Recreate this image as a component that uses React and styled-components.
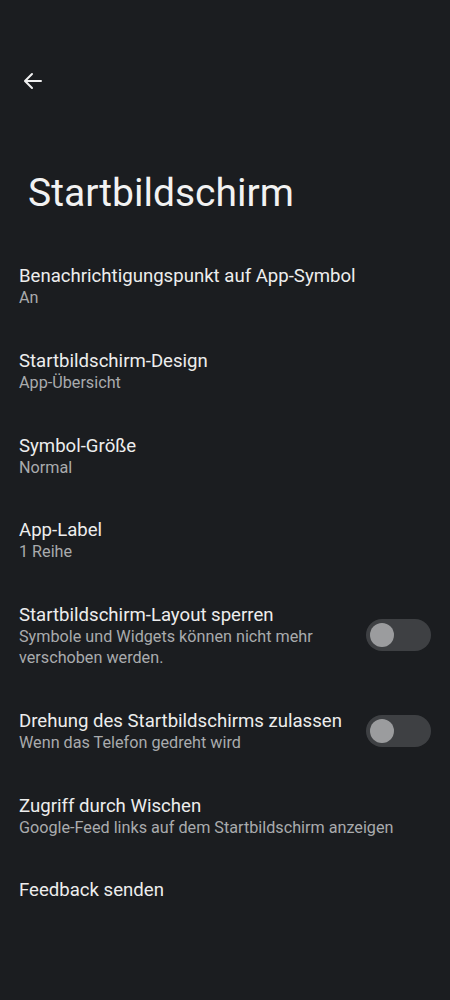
import React from "react";
import styled, { createGlobalStyle } from "styled-components";

const Global = createGlobalStyle`
    body {
        margin: 0;
        background: #1b1d20;
        font-family: Roboto, "Noto Sans", sans-serif;
        -webkit-font-smoothing: antialiased;
    }
`;

const Page = styled.div`
    min-height: 1000px;
    background: #1b1d20;
    color: #e6e6e6;
`;

const TopBar = styled.div`
    height: 48px;
    padding: 57px 0 0 21px;
    display: flex;
    align-items: center;
`;

const BackButton = styled.button`
    width: 24px;
    height: 24px;
    padding: 0;
    border: none;
    background: none;
    display: flex;
    align-items: center;
    justify-content: center;
    color: #f0f0f0;
`;

const Title = styled.h1`
    margin: 65px 0 28px 28px;
    font-size: 39px;
    line-height: 46px;
    font-weight: 400;
    color: #f2f2f2;
`;

const List = styled.div`
    display: flex;
    flex-direction: column;
`;

const Row = styled.div`
    display: flex;
    align-items: center;
    gap: 16px;
    padding: 20px 19px 20px 19px;
`;

const Texts = styled.div`
    flex: 1;
    display: flex;
    flex-direction: column;
`;

const ItemTitle = styled.div`
    font-size: 18.6px;
    line-height: 24px;
    color: #ededed;
`;

const ItemSub = styled.div`
    font-size: 16.2px;
    line-height: 20.8px;
    color: #a9abad;
`;

const Track = styled.div`
    flex: none;
    width: 65px;
    height: 32px;
    margin-top: -1px;
    border-radius: 16px;
    background: #3e4043;
    display: flex;
    align-items: center;
    padding: 0 4px;
    box-sizing: border-box;
    justify-content: ${(p) => (p.$on ? "flex-end" : "flex-start")};
`;

const Thumb = styled.div`
    width: 24px;
    height: 24px;
    border-radius: 50%;
    background: #9b9c9e;
`;

const items = [
    { title: "Benachrichtigungspunkt auf App-Symbol", sub: ["An"] },
    { title: "Startbildschirm-Design", sub: ["App-Übersicht"] },
    { title: "Symbol-Größe", sub: ["Normal"] },
    { title: "App-Label", sub: ["1 Reihe"] },
    {
        title: "Startbildschirm-Layout sperren",
        sub: ["Symbole und Widgets können nicht mehr", "verschoben werden."],
        toggle: true,
    },
    {
        title: "Drehung des Startbildschirms zulassen",
        sub: ["Wenn das Telefon gedreht wird"],
        toggle: true,
    },
    {
        title: "Zugriff durch Wischen",
        sub: ["Google-Feed links auf dem Startbildschirm anzeigen"],
    },
    { title: "Feedback senden", sub: [] },
];

export default () => {
    return (
        <Page>
            <Global />
            <TopBar>
                <BackButton>
                    <svg width="24" height="24" viewBox="0 0 24 24" fill="none">
                        <path
                            d="M20 12H4.5M11 5l-7 7 7 7"
                            stroke="currentColor"
                            strokeWidth="2"
                            strokeLinecap="round"
                            strokeLinejoin="round"
                        />
                    </svg>
                </BackButton>
            </TopBar>
            <Title>Startbildschirm</Title>
            <List>
                {items.map((item) => (
                    <Row key={item.title}>
                        <Texts>
                            <ItemTitle>{item.title}</ItemTitle>
                            {item.sub.map((s) => (
                                <ItemSub key={s}>{s}</ItemSub>
                            ))}
                        </Texts>
                        {item.toggle && (
                            <Track>
                                <Thumb />
                            </Track>
                        )}
                    </Row>
                ))}
            </List>
        </Page>
    );
};
